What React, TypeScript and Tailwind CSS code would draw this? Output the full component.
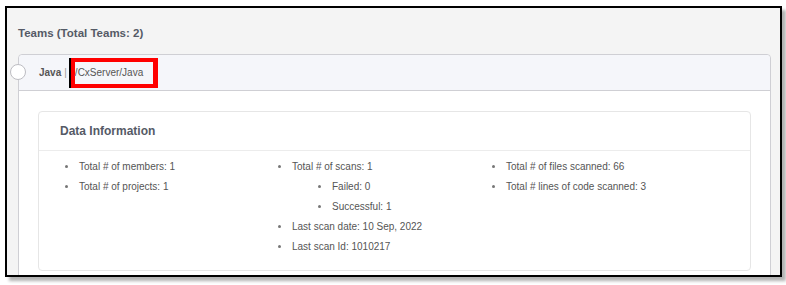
import React from "react";

const col1 = ["Total # of members: 1", "Total # of projects: 1"];
const col3 = ["Total # of files scanned: 66", "Total # lines of code scanned: 3"];

function Item({ text, sub }: { text: string; sub?: boolean }) {
  return (
    <li className={`flex items-center h-5 ${sub ? "pl-10" : ""}`}>
      <span className="w-[3px] h-[3px] rounded-full bg-[#777] ml-[2px] mr-[11px]" />
      <span>{text}</span>
    </li>
  );
}

export default function App() {
  return (
    <div
      className="w-[786px] h-[285px] bg-white pt-[6px] pl-[5px]"
      style={{ fontFamily: '"Liberation Sans", Arial, sans-serif' }}
    >
      <div className="w-[777px] h-[271px] border-2 border-black bg-[#f4f4f4] overflow-hidden shadow-[4px_4px_3px_rgba(0,0,0,0.3)] pl-[11px] pr-[9px]">
        <h2 className="mt-[15px] h-[20px] text-[11.5px] font-bold text-[#555a66] leading-5">
          Teams (Total Teams: 2)
        </h2>
        <div className="relative mt-[11px] border border-[#cfcfd4] rounded-t-[4px] bg-white h-[240px]">
          <div className="h-[36px] bg-[#f5f6fa] border-b border-[#cfcfd4] rounded-t-[4px] flex items-center pl-[20px] text-[10px]">
            <span className="absolute -left-[9px] top-[9px] w-[16px] h-[16px] rounded-full border border-[#bdbdc2] bg-white" />
            <span className="font-bold text-[#555]">Java</span>
            <span className="ml-[3px] text-[#999]">|</span>
            <span className="ml-[2px] h-[30px] border-l-2 border-black flex">
              <span className="flex items-center border-4 border-r-[5px] border-[#ff0000] pl-0 pr-[10px] text-[#555]">
                /CxServer/Java
              </span>
            </span>
          </div>
          <div className="pt-[20px] px-[19px]">
            <div className="border border-[#e6e6e6] rounded-[4px] bg-white h-[160px]">
              <div className="h-[39px] border-b border-[#ececec] flex items-center pl-[21px] text-[12px] font-bold text-[#555a66]">
                Data Information
              </div>
              <div className="flex text-[10px] text-[#555] pt-[5px] pl-[24px]">
                <ul className="w-[213px]">
                  {col1.map((t) => (
                    <Item key={t} text={t} />
                  ))}
                </ul>
                <ul className="w-[214px]">
                  <Item text="Total # of scans: 1" />
                  <Item text="Failed: 0" sub />
                  <Item text="Successful: 1" sub />
                  <Item text="Last scan date: 10 Sep, 2022" />
                  <Item text="Last scan Id: 1010217" />
                </ul>
                <ul>
                  {col3.map((t) => (
                    <Item key={t} text={t} />
                  ))}
                </ul>
              </div>
            </div>
          </div>
        </div>
      </div>
    </div>
  );
}
